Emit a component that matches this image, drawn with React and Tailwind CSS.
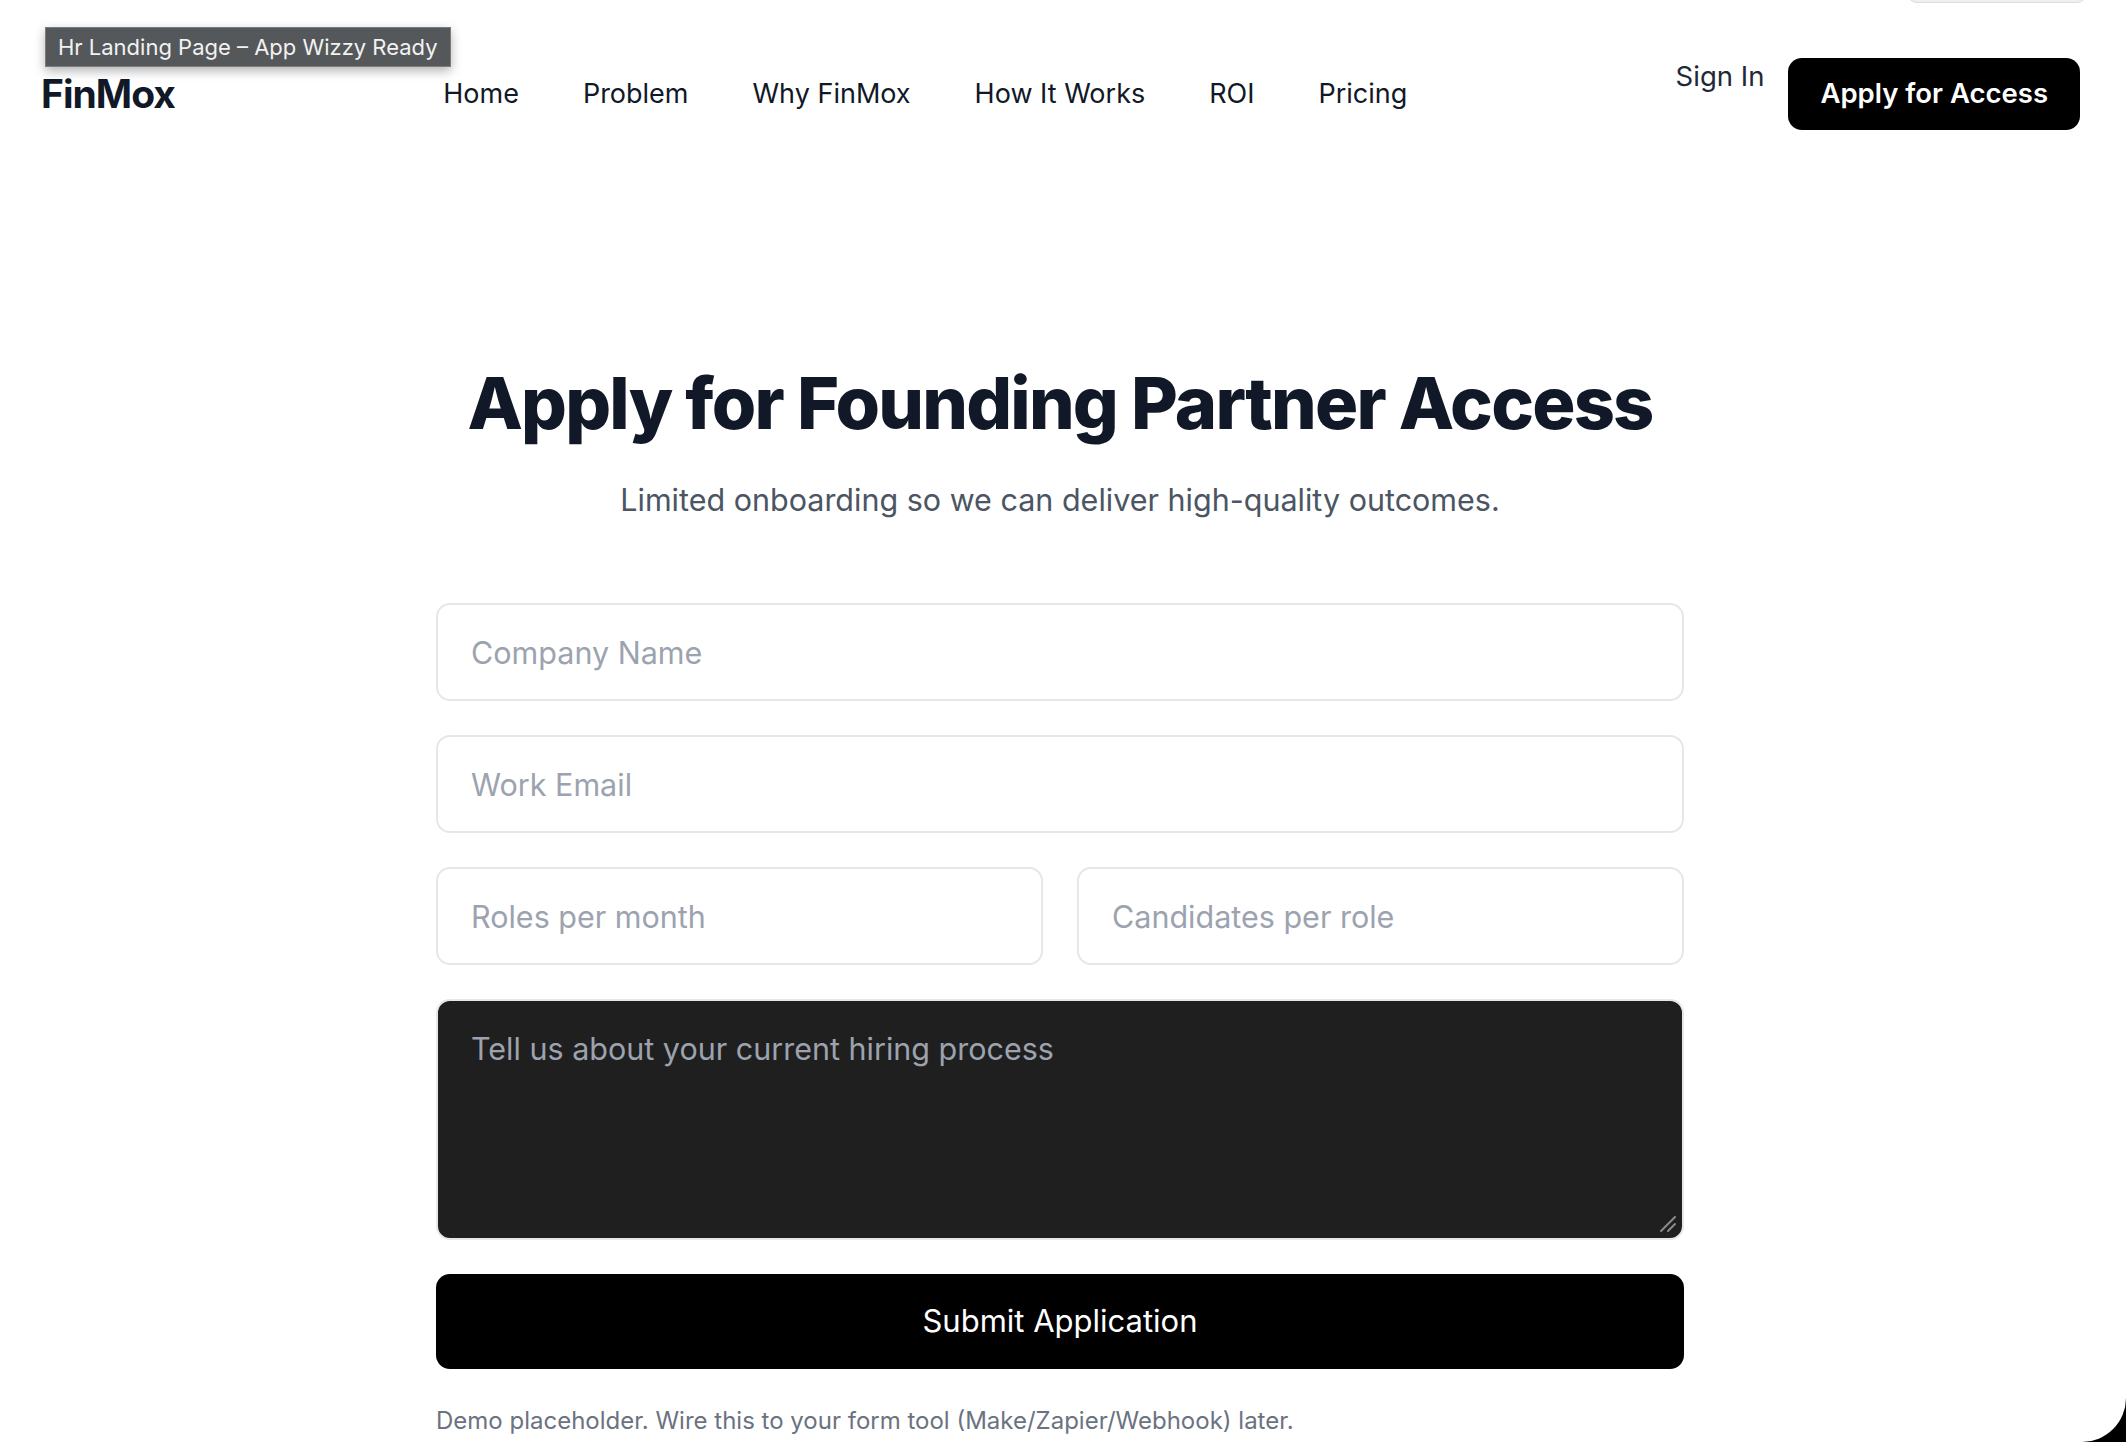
import { useState } from "react";

const navLinks = ["Home", "Problem", "Why FinMox", "How It Works", "ROI", "Pricing"];

const inputCls =
  "w-full h-[98px] rounded-[14px] border-2 border-[#e5e7eb] bg-white px-[33px] text-[30.5px] text-gray-900 placeholder:text-[#9ca3af] outline-none";

export default function App() {
  const [form, setForm] = useState({
    company: "",
    email: "",
    roles: "",
    candidates: "",
    process: "",
  });

  const update = (key) => (e) => setForm({ ...form, [key]: e.target.value });

  return (
    <div className="h-[1442px] w-full overflow-hidden bg-black font-['Inter',_sans-serif]">
      <div className="relative h-full w-full overflow-hidden rounded-br-[44px] bg-white">
        {/* bit of a card peeking in at the top edge */}
        <div className="absolute left-[1907px] top-[-10px] h-[13px] w-[180px] rounded-b-[10px] border border-[#dcdcdc] bg-[#efefef]" />

        {/* page title tooltip */}
        <div className="absolute left-[45px] top-[27px] z-10 border border-[#7a7d80] bg-[#55585b] px-[12px] py-[5px] text-[22px] leading-[28px] text-[#f2f2f2] shadow-[0_4px_10px_rgba(0,0,0,0.3)]">
          Hr Landing Page – App Wizzy Ready
        </div>

        <header className="flex items-center justify-between pl-[41px] pr-[46px] pt-[58px]">
          <div className="text-[39px] font-bold tracking-tight text-[#111827]">FinMox</div>
          <nav className="flex items-center gap-[64px]">
            {navLinks.map((link) => (
              <a key={link} href="#" className="text-[27px] text-[#111827]">
                {link}
              </a>
            ))}
          </nav>
          <div className="flex items-start gap-[24px]">
            <a href="#" className="mt-[-2px] text-[27.5px] text-[#1f2937]">
              Sign In
            </a>
            <button className="h-[72px] rounded-[14px] bg-black px-[32px] text-[27.5px] font-semibold text-white">
              Apply for Access
            </button>
          </div>
        </header>

        <main className="flex flex-col items-center pr-[6px] pt-[229px]">
          <h1 className="text-[72px] font-extrabold leading-[88px] tracking-tight text-[#111827]">
            Apply for Founding Partner Access
          </h1>
          <p className="mt-[30px] text-[30.5px] leading-[45px] text-[#4b5563]">
            Limited onboarding so we can deliver high-quality outcomes.
          </p>

          <form className="mt-[81px] flex w-[1248px] flex-col gap-[34px]" onSubmit={(e) => e.preventDefault()}>
            <input className={inputCls} placeholder="Company Name" value={form.company} onChange={update("company")} />
            <input className={inputCls} placeholder="Work Email" value={form.email} onChange={update("email")} />
            <div className="grid grid-cols-2 gap-[34px]">
              <input className={inputCls} placeholder="Roles per month" value={form.roles} onChange={update("roles")} />
              <input
                className={inputCls}
                placeholder="Candidates per role"
                value={form.candidates}
                onChange={update("candidates")}
              />
            </div>
            <div className="relative">
              <textarea
                className="block h-[241px] w-full resize-none rounded-[14px] border-2 border-[#e5e7eb] bg-[#1f1f1f] px-[33px] py-[28px] text-[30.5px] leading-[40px] text-white placeholder:text-[#9ca3af] outline-none"
                placeholder="Tell us about your current hiring process"
                value={form.process}
                onChange={update("process")}
              />
              {/* resize grip */}
              <svg className="pointer-events-none absolute bottom-[6px] right-[6px]" width="20" height="20" viewBox="0 0 20 20">
                <path d="M3 17 L17 3 M10 17 L17 10" stroke="#8a8a8a" strokeWidth="2" strokeLinecap="round" />
              </svg>
            </div>
            <button type="submit" className="h-[95px] w-full rounded-[14px] bg-black text-[31px] text-white">
              Submit Application
            </button>
          </form>
          <p className="mt-[34px] w-[1248px] text-[24px] text-[#6b7280]">
            Demo placeholder. Wire this to your form tool (Make/Zapier/Webhook) later.
          </p>
        </main>
      </div>
    </div>
  );
}
